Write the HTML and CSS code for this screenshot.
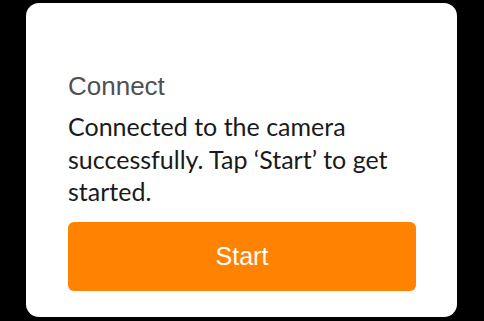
FILE: index.html
```html
<!DOCTYPE html>
<html>
<head>
<meta charset="utf-8">
<link rel="stylesheet" href="styles.css">
</head>
<body>
<div class="card">
  <h2 class="title">Connect</h2>
  <p class="message">Connected to the camera successfully. Tap ‘Start’ to get started.</p>
  <button class="start">Start</button>
</div>
</body>
</html>
```
FILE: styles.css
```css
html, body {
  margin: 0;
  padding: 0;
  background: #000;
  width: 484px;
  height: 321px;
  overflow: hidden;
}
body {
  padding: 3px 0 0 26px;
  box-sizing: border-box;
}
.card {
  width: 431px;
  height: 314px;
  background: #fff;
  border-radius: 13px;
  box-sizing: border-box;
  padding: 68px 41px 26px 42px;
  display: flex;
  flex-direction: column;
}
.title {
  margin: 0;
  font-family: "Liberation Sans", Arial, sans-serif;
  font-weight: normal;
  font-size: 26px;
  line-height: 30px;
  color: #505050;
}
.message {
  margin: 9px 0 0 0;
  font-family: Lato, sans-serif;
  font-size: 25px;
  line-height: 32.5px;
  color: #1a1a1a;
}
.start {
  margin-top: auto;
  height: 69px;
  width: 100%;
  border: none;
  border-radius: 6px;
  background: #ff8200;
  color: #fff;
  font-family: "Liberation Sans", Arial, sans-serif;
  font-size: 25px;
}
```
